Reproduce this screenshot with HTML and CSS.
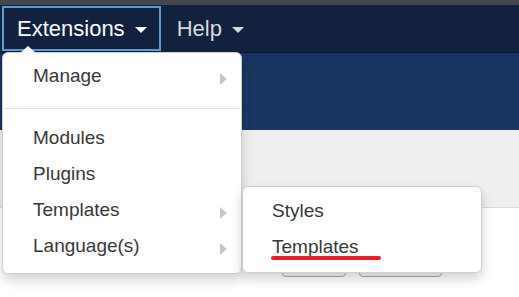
FILE: index.html
```html
<!doctype html>
<html lang="en">
<head>
	<meta charset="UTF-8">
	<title>Extensions menu</title>
	<link rel="stylesheet" href="styles.css">
</head>
<body>
	<div class="topstrip"></div>
	<div class="navbar">
		<a href="#" class="nav-item active">Extensions <span class="caret"></span></a>
		<a href="#" class="nav-item">Help <span class="caret"></span></a>
	</div>
	<div class="header-band"></div>
	<div class="subhead"></div>
	<div class="toolbar">
		<span class="btn btn-a"></span>
		<span class="btn btn-b"></span>
	</div>

	<!-- dropdown -->
	<ul class="dropdown">
		<li class="item has-sub">Manage</li>
		<li class="divider"></li>
		<li class="item">Modules</li>
		<li class="item">Plugins</li>
		<li class="item has-sub">Templates</li>
		<li class="item has-sub">Language(s)</li>
	</ul>
	<ul class="submenu">
		<li class="item">Styles</li>
		<li class="item marked">Templates<span class="mark"></span></li>
	</ul>
</body>
</html>
```

FILE: styles.css
```css
/*reset*/
*{padding:0;margin:0;box-sizing:border-box;}
ul{list-style:none;}
html,body{width:100%;height:100%;}
body{
	background:#fff;
	font-family:"Liberation Sans",Arial,sans-serif;
	overflow:hidden;
}
.topstrip{height:5px;background:#45474e;}
.navbar{
	height:48px;
	background:#12213d;
	border-bottom:1px solid #0c1629;
	display:flex;
	align-items:center;
	padding-left:2px;
}
.nav-item{
	height:45px;
	line-height:41px;
	padding:0 13px 0 14px;
	font-size:22px;
	color:#d6d9de;
	text-decoration:none;
	border:2px solid transparent;
	display:flex;align-items:center;gap:10px;
}
.nav-item.active{
	color:#fff;
	border-color:#5b9ad3;
	padding-left:13px;
	padding-right:12px;
}
.caret{
	display:inline-block;
	width:0;height:0;
	border-left:6px solid transparent;
	border-right:6px solid transparent;
	border-top:6px solid currentColor;
	margin-top:3px;
}
.header-band{height:77px;background:#1a3563;}
.subhead{height:78px;background:#efefef;border-bottom:1px solid #dcdcdc;}
.toolbar{display:flex;gap:13px;padding:39px 0 0 282px;}
.btn{
	display:block;height:30px;
	border:1px solid #aaa;border-radius:4px;
	background:#f7f7f7;
}
.btn-a{width:64px;}
.btn-b{width:83px;}

/*menus*/
.dropdown,.submenu{
	position:absolute;
	background:#fff;
	border:1px solid #d0d0d0;
	border-radius:6px;
	box-shadow:0 6px 12px rgba(0,0,0,0.18);
	color:#383838;
	font-size:19px;
}
.dropdown{left:2px;top:52px;width:240px;height:222px;padding-top:5px;}
.dropdown:before{
	content:'';
	position:absolute;left:17px;top:-7px;
	width:0;height:0;
	border-left:8px solid transparent;
	border-right:8px solid transparent;
	border-bottom:7px solid #fff;
}
.submenu{left:242px;top:186px;width:240px;height:87px;padding-top:6px;}
.item{
	height:36px;line-height:36px;
	padding-left:30px;
	position:relative;
}
.submenu .item{padding-left:29px;}
.has-sub:after{
	content:'';
	position:absolute;right:14px;top:50%;
	margin-top:-3px;
	width:0;height:0;
	border-top:6px solid transparent;
	border-bottom:6px solid transparent;
	border-left:7px solid #c9c9c9;
}
.divider{height:1px;background:#e6e6e6;margin:14px 0 11px 0;}
.mark{
	position:absolute;left:28px;top:27px;
	width:110px;height:4px;
	border-radius:2px;
	background:#e61e2a;
}
```
